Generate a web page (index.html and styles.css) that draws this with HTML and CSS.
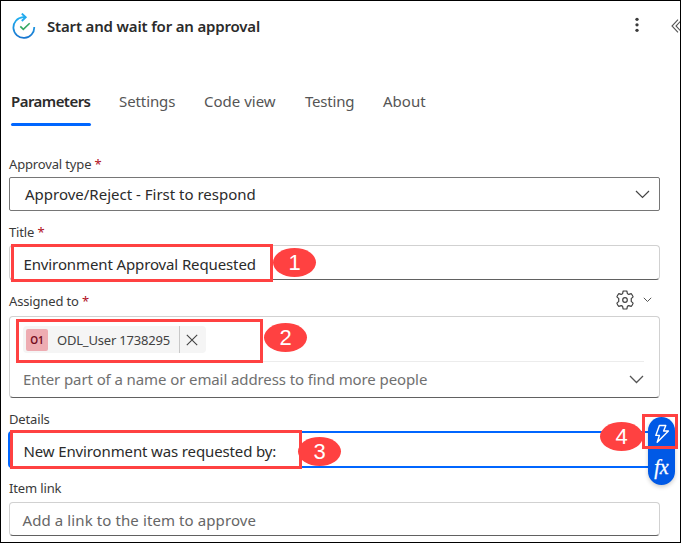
FILE: index.html
```html
<!DOCTYPE html>
<html lang="en">
<head>
<meta charset="utf-8">
<title>Start and wait for an approval</title>
<link rel="stylesheet" href="styles.css">
</head>
<body>
<main class="panel">
  <header class="header">
    <svg class="logo" width="24" height="26" viewBox="0 0 24 26" fill="none">
      <defs><linearGradient id="ring" x1="0" y1="0" x2="0" y2="1"><stop offset="0" stop-color="#22b0f0"/><stop offset="1" stop-color="#1976cf"/></linearGradient></defs>
      <path d="M13 4.2H11A10.4 10.4 0 1 0 22.2 14" stroke="url(#ring)" stroke-width="1.8"/>
      <path d="M9.8.6l3.9 3.6-3.9 3.8" stroke="#22a9ee" stroke-width="1.9"/>
      <path d="M8.3 13.4l3 3 6.4-6.2" stroke="#35a862" stroke-width="1.6"/>
    </svg>
    <h1 class="title">Start and wait for an approval</h1>
    <svg class="more" width="6" height="16" viewBox="0 0 6 16" fill="#3b3b3b"><circle cx="3" cy="2.3" r="1.65"/><circle cx="3" cy="7.8" r="1.65"/><circle cx="3" cy="13.3" r="1.65"/></svg>
    <svg class="collapse" width="9" height="14" viewBox="0 0 9 14" fill="none" stroke="#555" stroke-width="1.1"><path d="M7 .7L1 7l6 6.3M11 .7L5 7l6 6.3"/></svg>
  </header>
  <nav class="tabs">
    <a class="tab tab-active">Parameters</a>
    <a class="tab tab-settings">Settings</a>
    <a class="tab tab-code">Code view</a>
    <a class="tab tab-testing">Testing</a>
    <a class="tab tab-about">About</a>
  </nav>
  <section class="form">
    <div class="field type-field">
      <div class="label">Approval type <b class="req">*</b></div>
      <div class="select"><span class="type-text">Approve/Reject - First to respond</span>
        <svg width="15" height="9" viewBox="0 0 15 9" fill="none" stroke="#444" stroke-width="1.2"><path d="M1 1l6.5 6.5L14 1"/></svg></div>
    </div>
    <div class="field title-field">
      <div class="label">Title <b class="req">*</b></div>
      <div class="input"><span class="title-text">Environment Approval Requested</span></div>
      <div class="mark mark-1"></div><div class="badge badge-1">1</div>
    </div>
    <div class="field people-field">
      <div class="label label-tools"><span>Assigned to <b class="req">*</b></span>
        <span class="tools">
          <svg width="20" height="20" viewBox="0 0 20 20" fill="none" stroke="#424242" stroke-width="1.2" stroke-linejoin="round"><path d="M8.1 1.2Q10 .8 11.9 1.2L12.4 3.7Q13.1 4 13.8 4.4L16.2 3.6Q17.5 5 18.1 6.9L16.2 8.6Q16.4 10 16.2 11.4L18.1 13.1Q17.5 15 16.2 16.4L13.8 15.6Q13.1 16 12.4 16.3L11.9 18.8Q10 19.2 8.1 18.8L7.6 16.3Q6.9 16 6.2 15.6L3.8 16.4Q2.5 15 1.9 13.1L3.8 11.4Q3.6 10 3.8 8.6L1.9 6.9Q2.5 5 3.8 3.6L6.2 4.4Q6.9 4 7.6 3.7Z"/><circle cx="10" cy="10" r="2.3"/></svg>
          <svg width="9" height="6" viewBox="0 0 9 6" fill="none" stroke="#555" stroke-width="1"><path d="M.8.8l3.7 3.7L8.2.8"/></svg>
        </span></div>
      <div class="people">
        <div class="chips"><div class="chip"><span class="avatar">O1</span><span class="name">ODL_User 1738295</span><span class="remove"><svg width="12" height="12" viewBox="0 0 12 12" stroke="#424242" stroke-width="1.1"><path d="M.8.8l10.4 10.4M11.2.8L.8 11.2"/></svg></span></div></div>
        <div class="search"><span class="search-text">Enter part of a name or email address to find more people</span>
          <svg width="15" height="9" viewBox="0 0 15 9" fill="none" stroke="#555" stroke-width="1.3"><path d="M1 1l6.5 6.5L14 1"/></svg></div>
      </div>
      <div class="mark mark-2"></div><div class="badge badge-2">2</div>
    </div>
    <div class="field details-field">
      <div class="label">Details</div>
      <div class="input input-focus"><span class="details-text">New Environment was requested by:</span></div>
      <div class="mark mark-3"></div><div class="badge badge-3">3</div>
      <div class="pill">
        <svg width="16" height="20" viewBox="0 0 16 20" fill="none" stroke="#fff" stroke-width="1.4" stroke-linejoin="round"><path d="M5.4 1.5h6.4L9.6 7h4.8L3.2 18.2 5.4 11.4H1.8Z"/></svg>
        <span class="fx">fx</span>
      </div>
      <div class="badge badge-4">4</div><div class="mark mark-4"></div>
    </div>
    <div class="field link-field">
      <div class="label">Item link</div>
      <div class="input"><span class="link-text">Add a link to the item to approve</span></div>
    </div>
  </section>
</main>
</body>
</html>
```
FILE: styles.css
```css
* { box-sizing: border-box; }
body { margin: 0; background: #fff; color: #2b2b2b; font: 15px/20px "Noto Sans", sans-serif; }
svg { display: block; flex: none; }
span { white-space: nowrap; }
.panel { width: 681px; height: 543px; border: 1px solid #000; overflow: hidden; }
.header { display: flex; align-items: center; height: 52px; padding-left: 11px; }
.logo { margin-top: -2px; }
.title { margin: -2px 0 0 11px; width: 213px; font-size: 15px; font-weight: 600; white-space: nowrap; letter-spacing: -.17px; }
.more { margin-left: 374px; margin-top: -4px; }
.collapse { margin-left: 31px; margin-top: -2px; }
.tabs { display: flex; gap: 28px; height: 42px; margin: 32px 0 0 10px; }
.tab { height: 41px; padding-top: 6px; color: #555; white-space: nowrap; }
.tab-active { display: flex; flex-direction: column; justify-content: space-between; width: 80px; color: #2b2b2b; font-weight: 600; letter-spacing: -.55px; }
.tab-active::after { content: ""; height: 3px; border-radius: 2px; background: #0066ff; }
.tab-settings { width: 57px; letter-spacing: -.1px; }
.tab-code { width: 73px; }
.tab-testing { width: 49px; letter-spacing: -.2px; }
.tab-about { padding-left: 1px; }
.form { padding: 28px 20px 0 8px; }
.field { position: relative; width: 651px; }
.label { height: 22px; font-size: 13px; line-height: 19px; color: #3a3a3a; letter-spacing: -.15px; }
.req { color: #b10e1c; font-weight: 400; }
.select, .input { display: flex; align-items: center; border: 1px solid #d1d1d1; border-bottom-color: #616161; border-radius: 4px; height: 35px; padding-left: 13.5px; }
.select { justify-content: space-between; height: 34px; padding: 0 9px 0 15px; border-color: #767676; border-radius: 2px; }
.title-field { margin-top: 12px; }
.title-field .input { padding-top: 2px; }
.title-text { letter-spacing: -.12px; }
.people-field { margin-top: 12px; }
.label-tools { display: flex; justify-content: space-between; height: 24px; }
.tools { display: flex; gap: 8px; align-items: center; height: 15px; padding-right: 8px; }
.people { height: 82px; padding: 9px 15px 0 13px; border: 1px solid #d1d1d1; border-bottom-color: #616161; border-radius: 4px; }
.chips { height: 36px; border-bottom: 1px solid #ececec; }
.chip { display: flex; align-items: center; width: 183px; height: 27px; border-radius: 4px; background: #f5f5f5; font-size: 13px; }
.avatar { width: 22px; height: 22px; margin-left: 3px; border-radius: 2px; background: #eeacb2; color: #750b1c; font-size: 10px; font-weight: 600; line-height: 22px; text-align: center; }
.name { width: 122px; margin-left: 9px; letter-spacing: -.2px; color: #424242; }
.remove { display: flex; align-items: center; height: 27px; padding-left: 6px; border-left: 1px solid #c8c8c8; }
.search { display: flex; align-items: center; justify-content: space-between; height: 34px; color: #707070; }
.search-text { letter-spacing: -.1px; }
.details-field { margin-top: 12px; }
.details-field .label { height: 21px; }
.input-focus { width: 652px; height: 37px; margin-left: -1px; padding-top: 2px; border: 2px solid #0066ff; }
.details-text { letter-spacing: -.13px; }
.link-field { margin-top: 11px; }
.link-field .label { height: 23px; }
.link-field .input { height: 34px; color: #666; padding-left: 12.5px; padding-top: 2px; }
.link-text { letter-spacing: .1px; }
.mark { position: absolute; border: 3px solid #ff4141; }
.mark-1 { left: 2px; top: 21px; width: 262px; height: 38px; }
.mark-2 { left: 7px; top: 27px; width: 247px; height: 44px; }
.mark-3 { left: 1px; top: 20px; width: 292px; height: 39px; }
.mark-4 { left: 633px; top: 4px; width: 36px; height: 35px; }
.badge { position: absolute; width: 43px; height: 29px; border-radius: 50%; background: #ff4141; color: #fff; font: 22px/29px "Liberation Sans", sans-serif; text-align: center; }
.badge-1 { left: 264px; top: 25px; }
.badge-2 { left: 255px; top: 31px; }
.badge-3 { left: 289px; top: 27px; }
.badge-4 { left: 591px; top: 12px; }
.pill { position: absolute; left: 639px; top: 7px; width: 27px; height: 68px; padding-top: 7px; display: flex; flex-direction: column; align-items: center; gap: 13px; border-radius: 14px; background: #0059e6; color: #fff; box-shadow: 0 2px 4px #0003; }
.fx { font: italic 20px/20px "Liberation Serif", serif; -webkit-text-stroke: .3px #fff; }
```
